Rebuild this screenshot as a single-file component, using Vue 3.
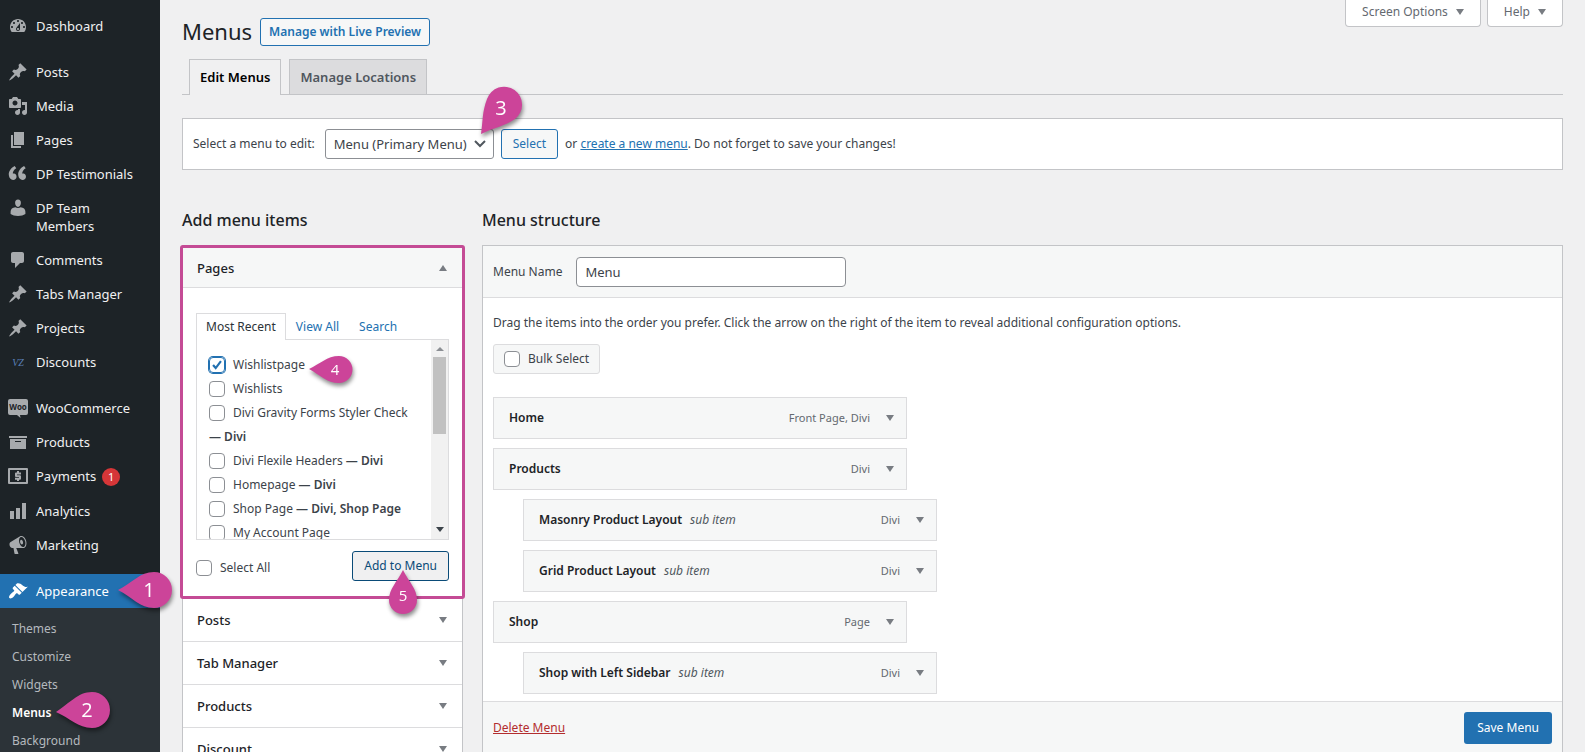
<script setup>
import { ref } from 'vue'

const icons = {
  dashboard: 'M3.76 16h12.48c1.1-1.37 1.76-3.11 1.76-5 0-4.42-3.58-8-8-8s-8 3.58-8 8c0 1.89.66 3.63 1.76 5zM10 4c.55 0 1 .45 1 1s-.45 1-1 1-1-.45-1-1 .45-1 1-1zM6 6c.55 0 1 .45 1 1s-.45 1-1 1-1-.45-1-1 .45-1 1-1zm8 0c.55 0 1 .45 1 1s-.45 1-1 1-1-.45-1-1 .45-1 1-1zm-5.37 5.55L12 7v6c0 1.1-.9 2-2 2s-2-.9-2-2c0-.57.24-1.08.63-1.45zM4 10c.55 0 1 .45 1 1s-.45 1-1 1-1-.45-1-1 .45-1 1-1zm12 0c.55 0 1 .45 1 1s-.45 1-1 1-1-.45-1-1 .45-1 1-1zm-5 3c0-.55-.45-1-1-1s-1 .45-1 1 .45 1 1 1 1-.45 1-1z',
  pin: 'M10.44 3.02l1.82-1.82 6.36 6.35-1.83 1.82c-1.05-.68-2.48-.57-3.41.36l-.75.75c-.92.93-1.04 2.35-.35 3.41l-1.83 1.82-2.41-2.41-2.8 2.79c-.42.42-3.38 2.71-3.8 2.29s1.86-3.39 2.28-3.81l2.79-2.79L4.1 9.36l1.83-1.82c1.05.69 2.48.57 3.4-.36l.75-.75c.93-.92 1.05-2.35.36-3.41z',
  media: 'M13 11V4c0-.55-.45-1-1-1h-1.67L9 1H5L3.67 3H2c-.55 0-1 .45-1 1v7c0 .55.45 1 1 1h10c.55 0 1-.45 1-1zM7 4.5c1.38 0 2.5 1.12 2.5 2.5S8.38 9.5 7 9.5 4.5 8.38 4.5 7 5.62 4.5 7 4.5zM14 6h5v10.5c0 1.38-1.12 2.5-2.5 2.5S14 17.88 14 16.5s1.12-2.5 2.5-2.5c.17 0 .34.02.5.05V9h-3V6zm-4 8.05V13h2v3.5c0 1.38-1.12 2.5-2.5 2.5S7 17.88 7 16.5 8.12 14 9.5 14c.17 0 .34.02.5.05z',
  page: 'M6 15V2h10v13H6zm-1 1h8v2H3V5h2v11z',
  quote: 'M8.54 12.74c0-.87-.24-1.61-.72-2.22-.73-.92-2.14-1.03-2.96-.85-.34-1.93 1.3-4.39 3.42-5.45L6.65 1.94C3.45 3.46.31 6.96.85 11.37 1.19 14.16 2.8 16 5.08 16c1 0 1.83-.29 2.48-.88.66-.59.98-1.38.98-2.38zm9.43 0c0-.87-.24-1.61-.72-2.22-.73-.92-2.14-1.03-2.96-.85-.34-1.93 1.3-4.39 3.42-5.45l-1.63-2.28c-3.2 1.52-6.34 5.02-5.8 9.43.34 2.79 1.95 4.63 4.23 4.63 1 0 1.83-.29 2.48-.88.66-.59.98-1.38.98-2.38z',
  person: 'M10 1.6c1.9 0 3 1.5 2.9 3.5C12.8 7.2 11.6 9 10 9S7.2 7.2 7.1 5.1C7 3.1 8.1 1.6 10 1.6zM2.6 16v-2.2c0-2.8 1.9-4.300 4.800-4.500.7.4 1.600.7 2.600.7s1.900-.3 2.600-.7c2.900.2 4.800 1.700 4.800 4.500V16c-1.800 1.300-4.400 1.900-7.400 1.900S4.400 17.300 2.600 16z',
  comment: 'M5 2h9c1.1 0 2 .9 2 2v7c0 1.1-.9 2-2 2h-2l-5 5v-5H5c-1.1 0-2-.9-2-2V4c0-1.1.9-2 2-2z',
  archive: 'M19 4v2H1V4h18zM2 7h16v10H2V7zm11 3V9H7v1h6z',
  bars: 'M18 18V2h-4v16h4zm-6 0V7H8v11h4zm-6 0v-8H2v8h4z',
  megaphone: 'M18.15 5.94c.46 1.62.38 3.22-.02 4.48-.42 1.28-1.26 2.18-2.3 2.48-.16.06-.26.06-.4.06-.06.02-.12.02-.18.02-.06.02-.14.02-.22.02h-6.8l2.22 5.5c.02.14-.06.26-.14.34-.08.1-.24.16-.34.16H6.95c-.1 0-.26-.06-.34-.16-.08-.08-.16-.2-.14-.34l-1-5.5H4.25l-.02-.02c-.5.06-1.08-.18-1.54-.62s-.88-1.08-1.06-1.88c-.24-.8-.2-1.56-.02-2.2.18-.62.58-1.08 1.06-1.3l.02-.02 9-5.4c.1-.06.18-.1.24-.16.06-.04.14-.08.24-.12.16-.08.28-.12.5-.18 1.04-.3 2.24.1 3.22.98s1.84 2.24 2.26 3.86zm-2.58 5.98h-.02c.4-.1.74-.34 1.04-.7.58-.7.86-1.76.86-3.04 0-.64-.1-1.3-.28-1.98-.34-1.36-1.02-2.5-1.78-3.24s-1.68-1.1-2.46-.88c-.82.22-1.4.96-1.7 2-.32 1.04-.28 2.36.06 3.72.38 1.36 1 2.5 1.8 3.24.78.74 1.62 1.1 2.48.88zm-2.54-7.08c.22-.04.42-.02.62.04.38.16.76.48 1.02 1s.42 1.2.42 1.78c0 .3-.04.56-.12.8-.18.48-.44.84-.86.94-.34.1-.8-.06-1.14-.4s-.64-.86-.78-1.5c-.18-.62-.12-1.24.02-1.72s.48-.84.82-.94z',
  brush: 'M14.48 11.06L7.41 3.99l1.5-1.5c.5-.56 2.3-.47 3.51.32 1.21.8 1.43 1.28 2.91 2.1 1.18.64 2.45 1.26 4.45.85zm-.71.71L6.7 4.7 4.93 6.47c-.39.39-.39 1.02 0 1.41l1.06 1.06c.39.39.39 1.03 0 1.42-.6.6-1.43 1.11-2.21 1.69-.35.26-.7.53-1.01.84C1.43 14.23.4 16.08 1.4 17.07c.99 1 2.84-.03 4.18-1.36.31-.31.58-.66.85-1.02.57-.78 1.08-1.61 1.69-2.21.39-.39 1.02-.39 1.41 0l1.06 1.06c.39.39 1.02.39 1.41 0z',
}

const navGroups = [
  [{ label: 'Dashboard', icon: 'dashboard' }],
  [
    { label: 'Posts', icon: 'pin' },
    { label: 'Media', icon: 'media' },
    { label: 'Pages', icon: 'page' },
    { label: 'DP Testimonials', icon: 'quote' },
    { label: 'DP Team Members', icon: 'person' },
    { label: 'Comments', icon: 'comment' },
    { label: 'Tabs Manager', icon: 'pin' },
    { label: 'Projects', icon: 'pin' },
    { label: 'Discounts', icon: 'vz' },
  ],
  [
    { label: 'WooCommerce', icon: 'woo' },
    { label: 'Products', icon: 'archive' },
    { label: 'Payments', icon: 'payments', badge: 1 },
    { label: 'Analytics', icon: 'bars' },
    { label: 'Marketing', icon: 'megaphone' },
  ],
  [{ label: 'Appearance', icon: 'brush', active: true }],
]
const subNav = ['Themes', 'Customize', 'Widgets', 'Menus', 'Background']

const pages = ref([
  { title: 'Wishlistpage', checked: true },
  { title: 'Wishlists', checked: false },
  { title: 'Divi Gravity Forms Styler Check', state: 'Divi', checked: false },
  { title: 'Divi Flexile Headers', state: 'Divi', checked: false },
  { title: 'Homepage', state: 'Divi', checked: false },
  { title: 'Shop Page', state: 'Divi, Shop Page', checked: false },
  { title: 'My Account Page', checked: false },
])
const closedPanels = ['Posts', 'Tab Manager', 'Products', 'Discount']

const menuItems = [
  { title: 'Home', type: 'Front Page, Divi' },
  { title: 'Products', type: 'Divi' },
  { title: 'Masonry Product Layout', type: 'Divi', sub: true },
  { title: 'Grid Product Layout', type: 'Divi', sub: true },
  { title: 'Shop', type: 'Page' },
  { title: 'Shop with Left Sidebar', type: 'Divi', sub: true },
]
const menuName = ref('Menu')
const selectAll = ref(false)
const bulkSelect = ref(false)
</script>

<template>
  <div class="admin">
    <nav class="sidebar" aria-label="Main menu">
      <ul v-for="(group, g) in navGroups" :key="g" class="nav-group">
        <li v-for="item in group" :key="item.label">
          <a href="#" class="nav-item" :class="{ active: item.active }">
            <svg class="nav-icon" viewBox="0 0 20 20" aria-hidden="true">
              <text v-if="item.icon === 'vz'" x="10" y="14" class="vz">VZ</text>
              <template v-else-if="item.icon === 'woo'">
                <path d="M2 1h16a2 2 0 0 1 2 2v12a2 2 0 0 1-2 2h-6l.5 3-3.500-3H2a2 2 0 0 1-2-2V3a2 2 0 0 1 2-2z" />
                <text x="10" y="12" class="woo">Woo</text>
              </template>
              <template v-else-if="item.icon === 'payments'">
                <path fill-rule="evenodd" d="M1 2h18a1 1 0 0 1 1 1v14a1 1 0 0 1-1 1H1a1 1 0 0 1-1-1V3a1 1 0 0 1 1-1zm1 2v12h16V4z" />
                <path d="M9 5h2v1.500h2v2H9v.8h3a1 1 0 0 1 1 1v2.400a1 1 0 0 1-1 1h-1V15H9v-1.300H7v-2h4v-.8H8a1 1 0 0 1-1-1V7.500a1 1 0 0 1 1-1h1z" />
              </template>
              <path v-else :d="icons[item.icon]" />
            </svg>
            <span class="nav-label">{{ item.label }}<span v-if="item.badge" class="badge">{{ item.badge }}</span></span>
            <svg v-if="item.active" class="pin pin-nav" viewBox="0 0 66 50" aria-hidden="true">
              <path d="M4 22C18 15 26 4 40 4a18 18 0 0 1 0 36C26 40 18 29 4 22z" />
              <text x="35" y="29">1</text>
            </svg>
          </a>
        </li>
      </ul>
      <ul class="subnav">
        <li v-for="label in subNav" :key="label">
          <a href="#" :class="{ current: label === 'Menus' }">{{ label }}
            <svg v-if="label === 'Menus'" class="pin pin-sub" viewBox="0 0 66 50" aria-hidden="true">
              <path d="M4 24C18 15 26 4 40 4a18 18 0 0 1 0 36C26 40 18 30 4 24z" />
              <text x="35" y="29">2</text>
            </svg>
          </a>
        </li>
      </ul>
    </nav>

    <main class="content">
      <header class="top">
        <div class="title-row">
          <h1>Menus</h1>
          <a href="#" class="preview">Manage with Live Preview</a>
        </div>
        <div class="screen-meta">
          <button type="button">Screen Options <i class="tri"></i></button>
          <button type="button">Help <i class="tri"></i></button>
        </div>
      </header>

      <nav class="tabs" aria-label="Menus sections">
        <a href="#" class="tab on">Edit Menus</a>
        <a href="#" class="tab">Manage Locations</a>
      </nav>

      <form class="chooser" @submit.prevent>
        <label for="menu-select">Select a menu to edit:</label>
        <div class="select-wrap">
          <select id="menu-select"><option>Menu (Primary Menu)</option></select>
          <svg class="chevron" viewBox="0 0 12 8" aria-hidden="true"><path d="M1 1l5 5 5-5" /></svg>
          <svg class="pin pin-select" viewBox="0 0 54 60" aria-hidden="true">
            <path d="M4 51C6 38 5 29 10 16a18 18 0 1 1 28 20C28 43 16 45 4 51z" />
            <text x="24" y="32">3</text>
          </svg>
        </div>
        <button type="submit" class="btn">Select</button>
        <p>or <a href="#">create a new menu</a>. Do not forget to save your changes!</p>
      </form>

      <div class="columns">
        <section class="left">
          <h2>Add menu items</h2>
          <div class="accordion">
            <div class="open-panel">
              <button type="button" class="panel-head">Pages <i class="tri up"></i></button>
              <div class="panel-body">
                <div class="mini-tabs">
                  <a href="#" class="on">Most Recent</a>
                  <a href="#">View All</a>
                  <a href="#">Search</a>
                </div>
                <div class="page-box">
                  <ul class="page-list">
                    <li v-for="page in pages" :key="page.title">
                      <label><input v-model="page.checked" type="checkbox">{{ page.title }}<b v-if="page.state"> — {{ page.state }}</b></label>
                    </li>
                  </ul>
                  <div class="scrollbar" aria-hidden="true">
                    <i class="tri up"></i><span class="thumb"></span><i class="tri dark"></i>
                  </div>
                  <svg class="pin pin-page" viewBox="0 0 54 40" aria-hidden="true">
                    <path d="M4 17C15 12 22 4 34 4a13 13 0 0 1 0 27C22 31 15 23 4 17z" />
                    <text x="30" y="23">4</text>
                  </svg>
                </div>
                <div class="actions">
                  <label><input v-model="selectAll" type="checkbox">Select All</label>
                  <div class="add-wrap">
                    <button type="button" class="btn add">Add to Menu</button>
                    <svg class="pin pin-add" viewBox="0 0 36 54" aria-hidden="true">
                      <path d="M18 3C24 15 32 22 32 33a14 14 0 0 1-28 0C4 22 12 15 18 3z" />
                      <text x="18" y="34">5</text>
                    </svg>
                  </div>
                </div>
              </div>
            </div>
            <button v-for="name in closedPanels" :key="name" type="button" class="panel-head closed">{{ name }} <i class="tri"></i></button>
          </div>
        </section>

        <section class="right">
          <h2>Menu structure</h2>
          <div class="editor">
            <div class="editor-head">
              <label for="menu-name">Menu Name</label>
              <input id="menu-name" v-model="menuName" type="text">
            </div>
            <div class="editor-body">
              <p>Drag the items into the order you prefer. Click the arrow on the right of the item to reveal additional configuration options.</p>
              <label class="bulk"><input v-model="bulkSelect" type="checkbox">Bulk Select</label>
              <ul class="items">
                <li v-for="item in menuItems" :key="item.title" :class="{ sub: item.sub }">
                  <strong>{{ item.title }}</strong>
                  <em v-if="item.sub">sub item</em>
                  <span class="type">{{ item.type }}</span>
                  <button type="button" :aria-label="'Edit ' + item.title"><i class="tri"></i></button>
                </li>
              </ul>
            </div>
            <footer class="editor-foot">
              <a href="#">Delete Menu</a>
              <button type="button" class="save">Save Menu</button>
            </footer>
          </div>
        </section>
      </div>
    </main>
  </div>
</template>

<style>
body { background: #f0f0f1; }
</style>

<style scoped>
* { box-sizing: border-box; }
.admin {
  display: flex;
  height: 100vh;
  overflow: hidden;
  background: #f0f0f1;
  color: #3c434a;
  font: 12px/20px "Noto Sans", "Open Sans", sans-serif;
}
ul, h1, h2, p { margin: 0; padding: 0; list-style: none; }
button, input, select { font: inherit; color: inherit; margin: 0; }
button { cursor: pointer; }
a { color: #2271b1; }

.sidebar {
  position: relative;
  z-index: 2;
  flex: 0 0 160px;
  padding-top: 9px;
  background: #1d2327;
}
.nav-group + .nav-group { margin-top: 12px; }
.nav-item {
  position: relative;
  display: flex;
  gap: 8px;
  padding: 8px 20px 8px 8px;
  color: #f0f0f1;
  font-size: 13px;
  line-height: 18px;
  text-decoration: none;
}
.nav-item.active { background: #2271b1; color: #fff; }
.nav-icon { flex: none; width: 20px; height: 20px; margin: -1px 0; fill: #a7aaad; }
.active .nav-icon { fill: #fff; }
.vz { fill: #5a80b8; font: italic 10px "Liberation Serif", serif; text-anchor: middle; }
.woo { fill: #1d2327; font: bold 8px "Open Sans", sans-serif; text-anchor: middle; }
.badge {
  display: inline-block;
  width: 18px;
  margin-left: 6px;
  border-radius: 9px;
  background: #d63638;
  color: #fff;
  font-size: 11px;
  text-align: center;
}
.subnav { height: 100%; padding-top: 7px; background: #2c3338; }
.subnav a {
  position: relative;
  display: block;
  padding: 4px 12px;
  color: #b4b9be;
  text-decoration: none;
}
.subnav .current { color: #fff; font-weight: 600; }

.pin { position: absolute; z-index: 3; overflow: visible; pointer-events: none; filter: drop-shadow(1px 3px 2px rgba(0, 0, 0, 0.45)); }
.pin path { fill: #cc4499; }
.pin text { fill: #fff; font: 20px "Open Sans", sans-serif; text-anchor: middle; }
.pin-nav { left: 114px; top: -6px; width: 66px; height: 50px; }
.pin-sub { left: 52px; top: -11px; width: 66px; height: 50px; }
.pin-select { left: 152px; top: -46px; width: 54px; height: 60px; }
.pin-page { left: 108px; top: 12px; width: 54px; height: 40px; }
.pin-add { left: 33px; top: 16px; width: 36px; height: 54px; }
.pin.pin-page text, .pin.pin-add text { font-size: 15px; }

.content { flex: 1; min-width: 0; padding: 0 22px; }
.top { display: flex; justify-content: space-between; align-items: flex-start; }
.title-row { display: flex; align-items: center; gap: 8px; padding-top: 18px; }
h1 { padding-bottom: 2px; color: #1d2327; font-size: 22px; font-weight: 400; line-height: 26px; }
.preview {
  padding: 3px 8px;
  border: 1px solid #2271b1;
  border-radius: 3px;
  background: #f6f7f7;
  font-weight: 600;
  text-decoration: none;
}
.screen-meta { display: flex; gap: 6px; }
.screen-meta button {
  display: flex;
  align-items: center;
  gap: 8px;
  height: 27px;
  padding: 0 16px 3px;
  border: 1px solid #c3c4c7;
  border-top: 0;
  border-radius: 0 0 4px 4px;
  background: #fff;
  color: #646970;
}
.tri {
  flex: none;
  width: 0;
  height: 0;
  border: 4px solid transparent;
  border-top: 6px solid #787c82;
  border-bottom: 0;
}
.tri.up { border-top: 0; border-bottom: 6px solid #787c82; }

.tabs { display: flex; gap: 8px; margin-top: 13px; padding: 0 7px; border-bottom: 1px solid #c3c4c7; }
.tab {
  padding: 5px 10px;
  border: 1px solid #c3c4c7;
  border-bottom: 0;
  background: #dcdcde;
  color: #50575e;
  font-size: 13px;
  font-weight: 600;
  line-height: 24px;
  text-decoration: none;
}
.tab.on { margin-bottom: -1px; background: #f0f0f1; color: #000; }

.chooser {
  display: flex;
  align-items: center;
  gap: 7px;
  margin-top: 23px;
  padding: 10px;
  border: 1px solid #c3c4c7;
  background: #fff;
}
.chooser label { margin-right: 3px; }
.select-wrap { position: relative; }
select {
  appearance: none;
  width: 169px;
  height: 30px;
  padding: 0 24px 0 8px;
  border: 1px solid #8c8f94;
  border-radius: 3px;
  background: #fff;
  font-size: 13px;
}
.chevron { position: absolute; right: 8px; top: 11px; width: 12px; height: 8px; fill: none; stroke: #50575e; stroke-width: 2; }
.btn {
  height: 30px;
  padding: 0 11px;
  border: 1px solid #2271b1;
  border-radius: 3px;
  background: #f6f7f7;
  color: #2271b1;
}
.btn.add { border-color: #0a4b78; background: #f0f0f1; color: #0a4b78; }

.columns { display: flex; align-items: flex-start; gap: 19px; margin-top: 39px; }
.left { flex: 0 0 281px; }
.right { flex: 1; min-width: 0; }
h2 { margin-bottom: 14px; color: #1d2327; font-size: 16px; font-weight: 500; line-height: 22px; }

.accordion { border: 1px solid #c3c4c7; border-top: 0; background: #fff; }
.open-panel { margin: 0 -3px; border: 3px solid #c44b95; border-radius: 3px; }
.panel-head {
  display: flex;
  align-items: center;
  justify-content: space-between;
  width: 100%;
  height: 40px;
  padding: 0 15px 0 14px;
  border: 0;
  border-bottom: 1px solid #dcdcde;
  background: #f6f7f7;
  color: #1d2327;
  font-size: 13px;
  font-weight: 500;
}
.panel-head.closed { height: 43px; background: #fff; }
.panel-body { padding: 25px 13px 15px; }
.mini-tabs { display: flex; }
.mini-tabs a { padding: 3px 9px 2px; border: 1px solid transparent; border-bottom: 0; text-decoration: none; }
.mini-tabs .on {
  position: relative;
  z-index: 1;
  margin-bottom: -1px;
  border-color: #dcdcde;
  background: #fff;
  color: #2c3338;
}
.page-box { position: relative; display: flex; height: 201px; border: 1px solid #dcdcde; }
.page-list { flex: 1; overflow: hidden; padding: 13px 12px 0 12px; line-height: 24px; }
.page-list b { font-weight: 600; }
input[type="checkbox"] {
  appearance: none;
  width: 16px;
  height: 16px;
  margin-right: 8px;
  border: 1px solid #8c8f94;
  border-radius: 4px;
  background: #fff;
  vertical-align: -4px;
}
input[type="checkbox"]:checked {
  border-color: #2271b1;
  background: url("data:image/svg+xml,%3Csvg xmlns='http://www.w3.org/2000/svg' viewBox='0 0 16 16'%3E%3Cpath d='M3.500 8l3 3.500 6-8' fill='none' stroke='%232271b1' stroke-width='2.500'/%3E%3C/svg%3E") center / 14px no-repeat;
  box-shadow: 0 0 0 1px #2271b1;
}
.scrollbar {
  display: flex;
  flex-direction: column;
  align-items: center;
  flex: 0 0 17px;
  padding: 7px 0;
  background: #f1f1f1;
}
.scrollbar .tri { border-top-width: 5px; border-top-color: #3c434a; }
.scrollbar .tri.up { border-top-width: 0; border-bottom: 4px solid #8c8f94; }
.thumb { width: 13px; height: 77px; margin: 6px 0 auto; background: #c1c1c1; }
.actions { display: flex; align-items: center; justify-content: space-between; margin-top: 11px; }
.actions label { padding-top: 4px; }
.add-wrap { position: relative; }

.editor { border: 1px solid #c3c4c7; background: #fff; }
.editor-head {
  display: flex;
  align-items: center;
  gap: 14px;
  padding: 11px 10px 10px;
  border-bottom: 1px solid #dcdcde;
  background: #f6f7f7;
}
.editor-head input {
  width: 270px;
  height: 30px;
  padding: 0 8px;
  border: 1px solid #8c8f94;
  border-radius: 4px;
  background: #fff;
  font-size: 13px;
}
.editor-body { padding: 15px 10px 7px; }
.bulk {
  display: inline-block;
  margin-top: 11px;
  padding: 4px 10px;
  border: 1px solid #dcdcde;
  border-radius: 3px;
  background: #f6f7f7;
}
.items { display: flex; flex-direction: column; gap: 9px; margin-top: 23px; }
.items li {
  display: flex;
  align-items: center;
  width: 414px;
  height: 42px;
  padding: 0 12px 0 15px;
  border: 1px solid #dcdcde;
  background: #f6f7f7;
}
.items .sub { margin-left: 30px; }
strong { color: #1d2327; font-weight: 600; }
em { margin-left: 8px; color: #50575e; }
.type { margin-left: auto; color: #646970; font-size: 11px; }
.items button { display: flex; margin-left: 16px; padding: 0; border: 0; background: none; }
.editor-foot {
  display: flex;
  align-items: center;
  justify-content: space-between;
  padding: 10px;
  border-top: 1px solid #dcdcde;
  background: #f6f7f7;
}
.editor-foot a { color: #b32d2e; }
.save { height: 32px; padding: 0 13px; border: 0; border-radius: 3px; background: #2271b1; color: #fff; }
</style>
